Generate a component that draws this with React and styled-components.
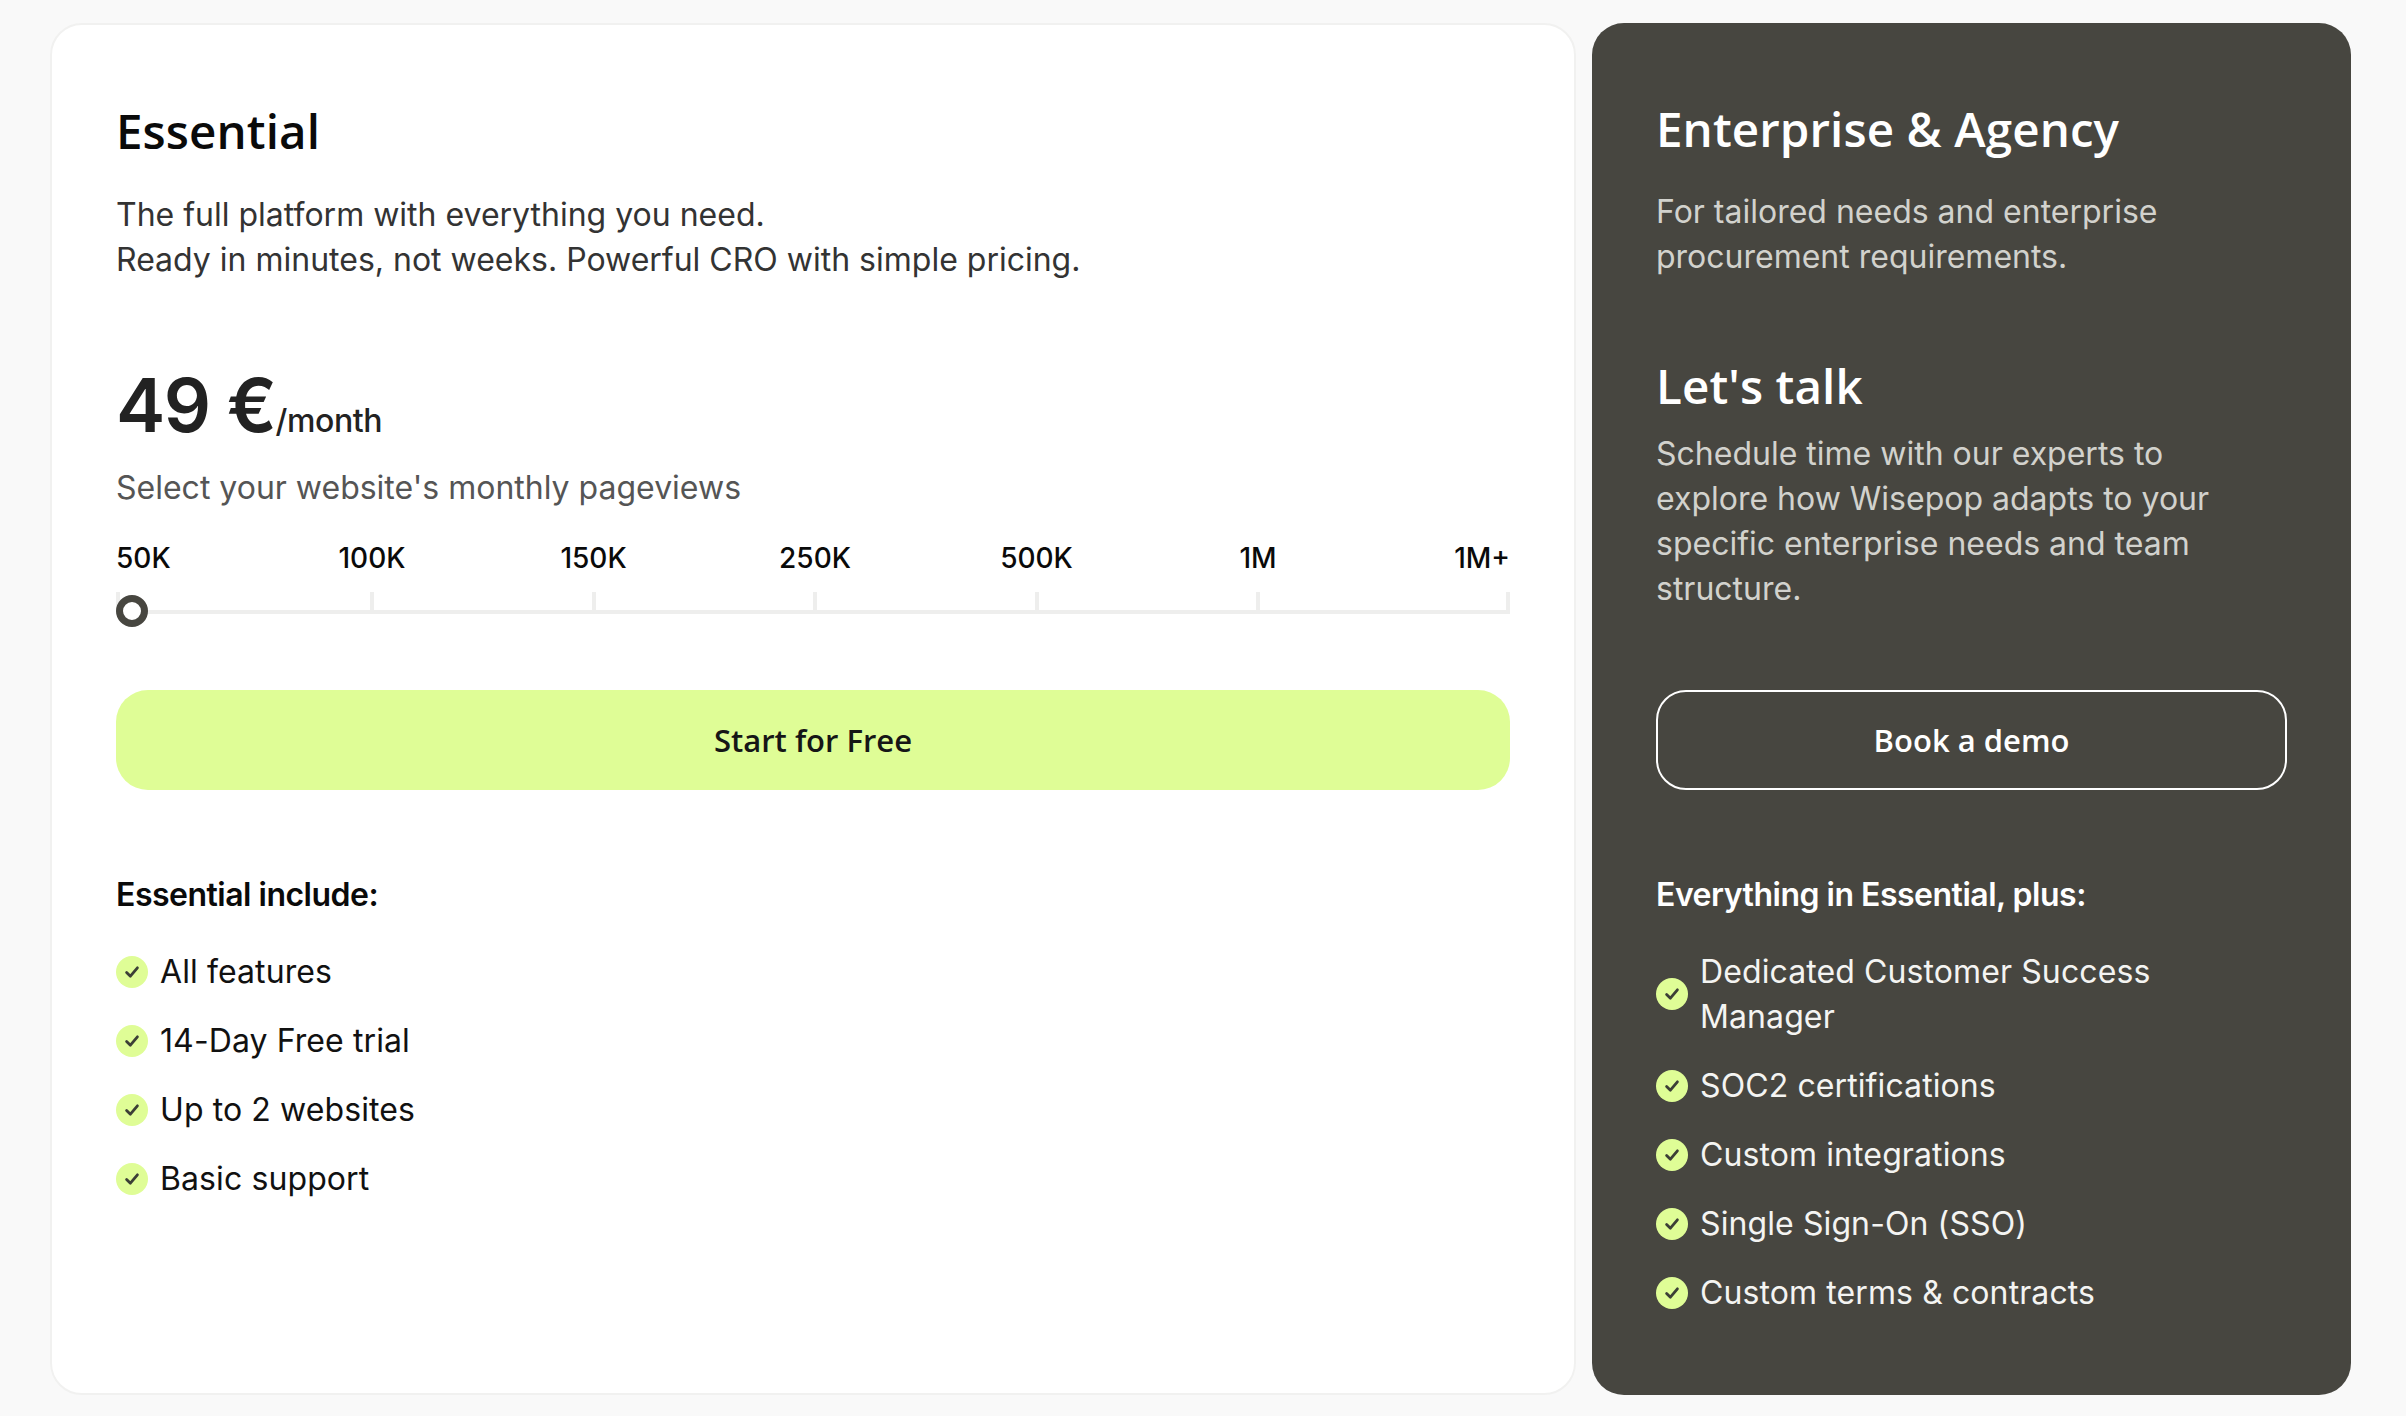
import React from "react";
import styled, { createGlobalStyle } from "styled-components";

const Global = createGlobalStyle`
  html, body { margin: 0; padding: 0; background: #f9f9f9; }
  body { font-family: "Inter", "Liberation Sans", sans-serif; }
  * { box-sizing: border-box; }
`;
const stopColumns = "254px repeat(4, 221.5px) 250px 4px";

const Page = styled.div`
  width: 2406px; height: 1416px; padding: 23px 55px 21px 50px;
  display: grid; grid-template-columns: 1526px 759px; column-gap: 16px;
`;
const Card = styled.section`
  border-radius: 32px;
  background: ${p => (p.$dark ? "#474640" : "#fff")};
  border: ${p => (p.$dark ? "none" : "2px solid #f1f1f0")};
  padding: 76px 64px 0;
  color: ${p => (p.$dark ? "#fff" : "#111")};
`;
const Title = styled.h2`
  margin: 0; font: 550 47.5px/60px "Open Sans", "Liberation Sans", sans-serif;
  letter-spacing: 0.1px;
  color: ${p => (p.$dark ? "#fff" : "#0a0a0a")};
  margin-top: ${p => p.$top || 0}px;
`;
const Para = styled.p`
  margin: ${p => p.$top || 0}px 0 0; font-size: 32px; line-height: 45px;
  font-weight: 400;
  color: ${p => p.$color || "#333"};
`;
const PriceRow = styled.div`
  margin-top: 78px; height: 90px; display: flex; align-items: baseline; color: #222;
`;
const Price = styled.span`
  font-size: 74px; line-height: 90px; font-weight: 600; letter-spacing: -1.5px;
`;
const Per = styled.span`
  font-size: 32px; font-weight: 500; letter-spacing: -0.4px;
`;
const Labels = styled.div`
  margin-top: 30px; height: 36px; display: grid; grid-template-columns: ${stopColumns};
`;
const Label = styled.span`
  display: flex; white-space: nowrap; width: 4px;
  justify-content: ${p => p.$align || "center"};
  font-size: 28px; line-height: 36px; font-weight: 500; color: #0a0a0a;
`;
const Slider = styled.div`
  position: relative; margin-top: 16px; height: 22px; border-bottom: 4px solid #eeeeed;
  display: grid; grid-template-columns: ${stopColumns};
`;
const Tick = styled.span`
  width: 4px; height: 18px; background: #eeeeed;
`;
const Thumb = styled.span`
  position: absolute; left: 0; top: 3px; width: 32px; height: 32px; border-radius: 50%;
  background: #fff; border: 7.5px solid #474640;
`;
const Cta = styled.div`
  height: 100px; border-radius: ${p => (p.$outline ? "30px" : "32px")};
  display: flex; align-items: center; justify-content: center;
  background: ${p => (p.$outline ? "transparent" : "#dffd96")};
  border: ${p => (p.$outline ? "2px solid #fff" : "none")};
  color: ${p => (p.$outline ? "#fff" : "#161616")};
  font: 600 31px/1 "Open Sans", "Liberation Sans", sans-serif;
  margin-top: ${p => p.$top}px;
`;
const ListHead = styled.h3`
  margin: ${p => p.$top}px 0 0; font-size: 32px; line-height: 45px; font-weight: 600; letter-spacing: -0.5px;
  color: ${p => (p.$dark ? "#fff" : "#0a0a0a")};
`;
const List = styled.ul`
  list-style: none; margin: 32px 0 0; padding: 0; display: flex; flex-direction: column; row-gap: 24px;
`;
const Item = styled.li`
  display: flex; align-items: center; column-gap: 12px;
  font-size: 32px; line-height: 45px; letter-spacing: 0.1px;
  color: ${p => (p.$dark ? "#f4f4f2" : "#111")};
`;
const Badge = styled.span`
  flex: none; width: 32px; height: 32px; border-radius: 50%; background: #dffd96;
  display: flex; align-items: center; justify-content: center;
`;

const Tickmark = () => (
  <Badge>
    <svg width="18" height="18" viewBox="0 0 18 18" fill="none">
      <path d="M3.6 9.4 7.4 13.2 14.4 4.8" stroke="#3c3f36" strokeWidth="2.8" strokeLinecap="round" strokeLinejoin="round" />
    </svg>
  </Badge>
);

const stops = ["50K", "100K", "150K", "250K", "500K", "1M", "1M+"];
const left = ["All features", "14-Day Free trial", "Up to 2 websites", "Basic support"];
const right = [
  <>Dedicated Customer Success<br />Manager</>,
  "SOC2 certifications",
  "Custom integrations",
  "Single Sign-On (SSO)",
  "Custom terms & contracts",
];

export default function App() {
  return (
    <>
      <Global />
      <Page>
        <Card>
          <Title>Essential</Title>
          <Para $top={31}>The full platform with everything you need.<br />Ready in minutes, not weeks. Powerful CRO with simple pricing.</Para>
          <PriceRow><Price>49 €</Price><Per>/month</Per></PriceRow>
          <Para $top={15} $color="#555">Select your website's monthly pageviews</Para>
          <Labels>
            {stops.map((s, i) => (
              <Label key={s} $align={i === 0 ? "flex-start" : i === stops.length - 1 ? "flex-end" : "center"}>{s}</Label>
            ))}
          </Labels>
          <Slider>
            {stops.map(s => <Tick key={s} />)}
            <Thumb />
          </Slider>
          <Cta $top={76}>Start for Free</Cta>
          <ListHead $top={82}>Essential include:</ListHead>
          <List>{left.map(t => <Item key={t}><Tickmark />{t}</Item>)}</List>
        </Card>
        <Card $dark>
          <Title $dark>Enterprise &amp; Agency</Title>
          <Para $top={30} $color="#d2d2cd">For tailored needs and enterprise<br />procurement requirements.</Para>
          <Title $dark $top={77}>Let's talk</Title>
          <Para $top={15} $color="#d2d2cd">Schedule time with our experts to<br />explore how Wisepop adapts to your<br />specific enterprise needs and team<br />structure.</Para>
          <Cta $outline $top={79}>Book a demo</Cta>
          <ListHead $dark $top={82}>Everything in Essential, plus:</ListHead>
          <List>{right.map((t, i) => <Item $dark key={i}><Tickmark />{t}</Item>)}</List>
        </Card>
      </Page>
    </>
  );
}
